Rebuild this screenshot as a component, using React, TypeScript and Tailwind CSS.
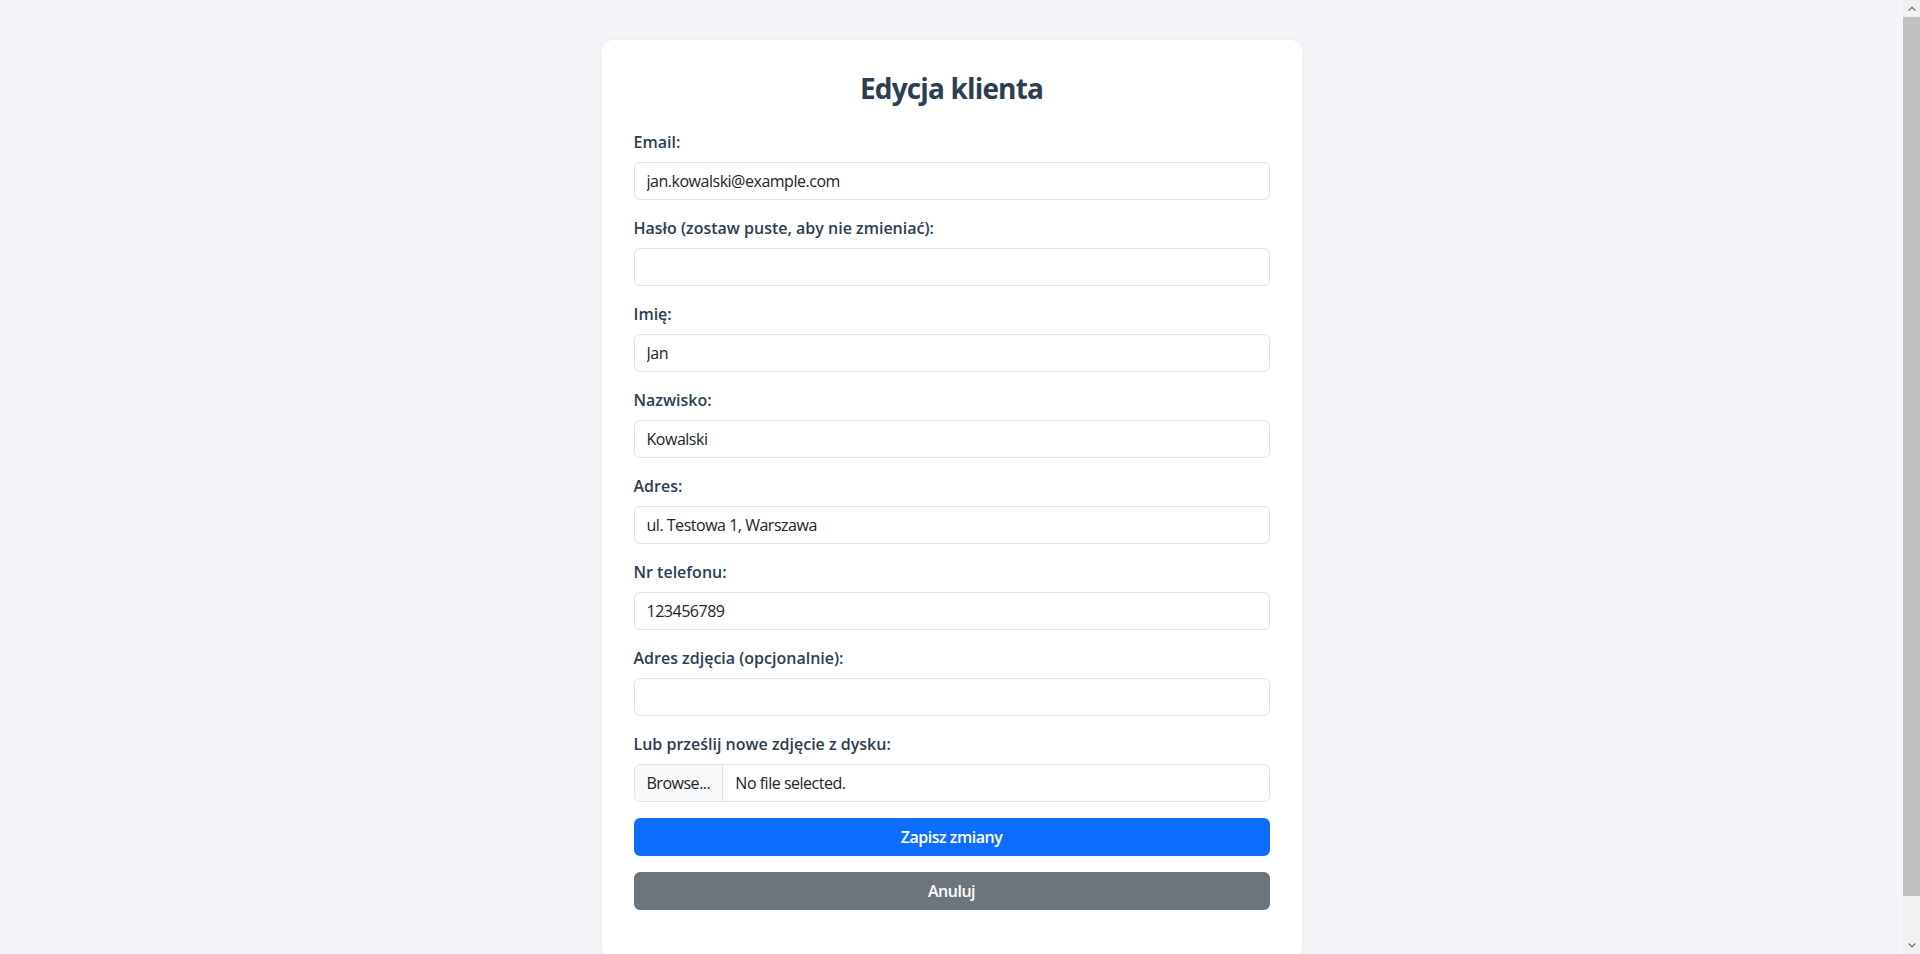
import React from "react";

type Field = {
  id: string;
  label: string;
  type: string;
  value: string;
};

const fields: Field[] = [
  { id: "email", label: "Email:", type: "email", value: "jan.kowalski@example.com" },
  { id: "haslo", label: "Hasło (zostaw puste, aby nie zmieniać):", type: "password", value: "" },
  { id: "imie", label: "Imię:", type: "text", value: "Jan" },
  { id: "nazwisko", label: "Nazwisko:", type: "text", value: "Kowalski" },
  { id: "adres", label: "Adres:", type: "text", value: "ul. Testowa 1, Warszawa" },
  { id: "telefon", label: "Nr telefonu:", type: "text", value: "123456789" },
  { id: "zdjecie", label: "Adres zdjęcia (opcjonalnie):", type: "text", value: "" },
];

function FormField({ field }: { field: Field }) {
  return (
    <div className="mb-4">
      <label htmlFor={field.id} className="mb-2 block text-base leading-6 font-semibold tracking-normal text-[#2c3e50]">
        {field.label}
      </label>
      <input
        id={field.id}
        type={field.type}
        defaultValue={field.value}
        className="block h-[38px] w-full rounded-md border border-[#dee2e6] bg-white px-3 text-base tracking-[-0.03em] text-[#212529] outline-none"
      />
    </div>
  );
}

// window scrollbar as seen in the screenshot
function Scrollbar() {
  return (
    <div className="flex h-screen w-[17px] shrink-0 flex-col bg-[#f1f1f1]">
      <div className="flex h-[17px] items-center justify-center">
        <svg width="8" height="5" viewBox="0 0 8 5">
          <path d="M0 4.5 L4 0.5 L8 4.5 L6.6 4.5 L4 2 L1.4 4.5 Z" fill="#505050" />
        </svg>
      </div>
      <div className="h-[879px] bg-[#c1c1c1]" />
      <div className="flex-1" />
      <div className="flex h-[17px] items-center justify-center">
        <svg width="8" height="5" viewBox="0 0 8 5">
          <path d="M0 0.5 L4 4.5 L8 0.5 L6.6 0.5 L4 3 L1.4 0.5 Z" fill="#505050" />
        </svg>
      </div>
    </div>
  );
}

export default function App() {
  return (
    <div className="flex h-screen overflow-hidden bg-[#f4f5f8] font-['Open_Sans','Noto_Sans',sans-serif]">
      <div className="flex-1 overflow-hidden py-10">
        <div className="mx-auto w-[700px] rounded-xl bg-white px-8 pt-8 pb-[49px] shadow-[0_0_10px_rgba(0,0,0,0.03)]">
          <h2 className="mb-6 text-center text-[28px] leading-[1.2] font-bold tracking-[-0.03em] text-[#2c3e50]">
            Edycja klienta
          </h2>
          <form className="tracking-[-0.03em]">
            {fields.map((f) => (
              <FormField key={f.id} field={f} />
            ))}
            <div className="mb-4">
              <label className="mb-2 block text-base leading-6 font-semibold tracking-normal text-[#2c3e50]">
                Lub prześlij nowe zdjęcie z dysku:
              </label>
              <div className="flex h-[38px] w-full overflow-hidden rounded-md border border-[#dee2e6] bg-white text-base text-[#212529]">
                <span className="flex items-center border-r border-[#dee2e6] bg-[#f8f9fa] px-3">Browse...</span>
                <span className="flex items-center px-3">No file selected.</span>
              </div>
            </div>
            <button
              type="button"
              className="mb-4 block h-[38px] w-full rounded-md bg-[#0d6efd] text-base font-semibold text-white"
            >
              Zapisz zmiany
            </button>
            <button
              type="button"
              className="block h-[38px] w-full rounded-md bg-[#6c757d] text-base font-semibold text-white"
            >
              Anuluj
            </button>
          </form>
        </div>
      </div>
      <Scrollbar />
    </div>
  );
}
